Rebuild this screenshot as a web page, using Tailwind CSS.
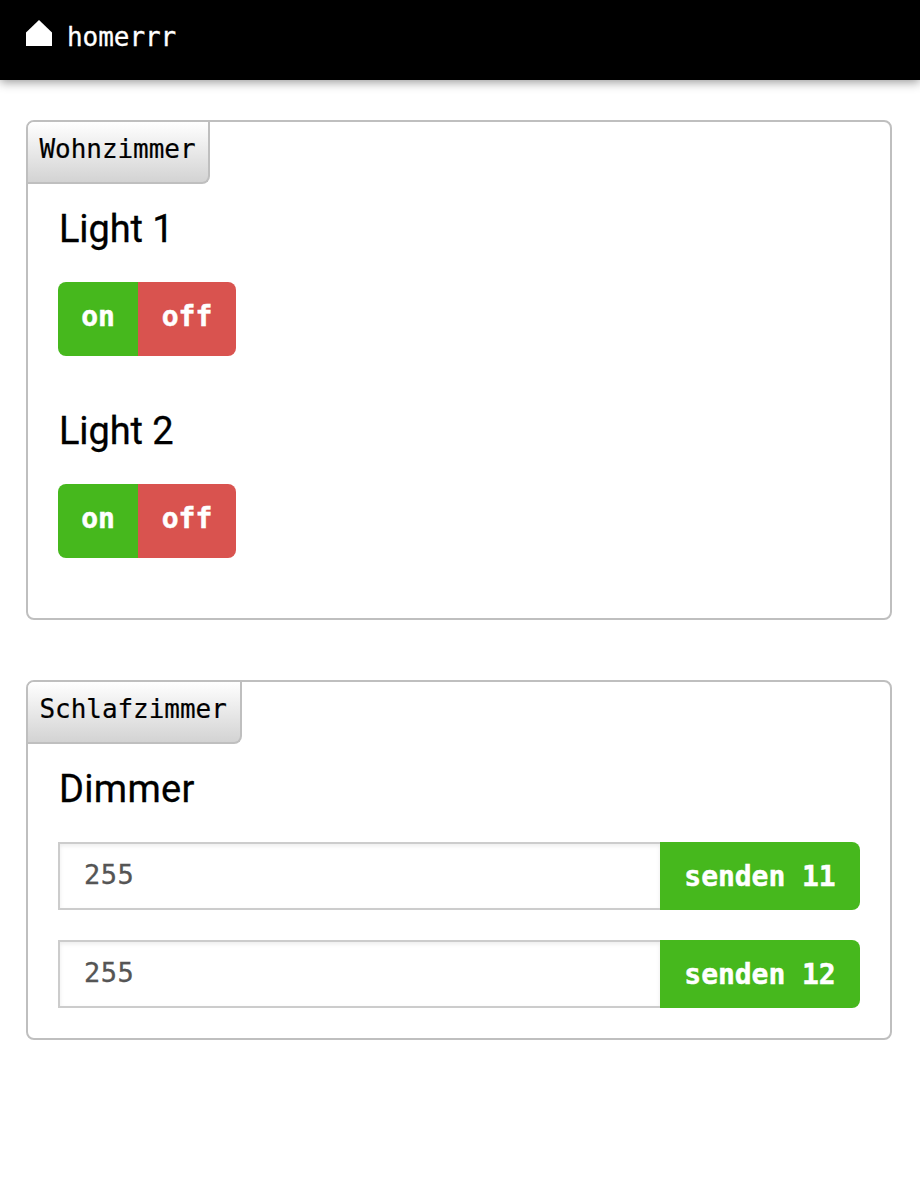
<!DOCTYPE html>
<html lang="de">
<head>
<meta charset="utf-8">
<title>homerrr</title>
<script src="https://cdn.jsdelivr.net/npm/@tailwindcss/browser@4"></script>
</head>
<body class="min-h-screen bg-white text-black font-['DejaVu_Sans_Mono',monospace]">
<header class="flex h-20 bg-black pl-[26px] text-white shadow-[0_2px_10px_rgba(0,0,0,0.42)]">
  <svg class="mt-5 h-[26px] w-[26px]" viewBox="0 0 26 26" fill="currentColor"><path d="M13 0L26 12.5V26H0V12.5Z"/></svg>
  <span class="ml-[15px] text-[26px] leading-[75px] tracking-[-0.05px] [-webkit-text-stroke:0.3px_currentColor]">homerrr</span>
</header>
<main class="flex flex-col gap-[60px] pt-10 pr-7 pl-[26px]">
  <section class="h-[500px] rounded-lg border-2 border-[#bfbfbf]">
    <div class="h-[62px] w-[182px] rounded-tl-md rounded-br-lg border-r-2 border-b-2 border-[#bfbfbf] bg-linear-to-b from-white to-[#d3d3d3] pl-[11.5px] text-[26px] leading-[55px] tracking-[-0.05px] [-webkit-text-stroke:0.2px_currentColor]">Wohnzimmer</div>
    <div class="px-[30px] pt-[13px]">
      <h2 class="h-[60px] pl-px font-['Roboto',sans-serif] text-[38px] leading-[65px] tracking-[-0.1px] [-webkit-text-stroke:0.3px_currentColor]">Light 1</h2>
      <div class="mt-[25px] flex h-[74px] w-[178px] overflow-hidden rounded-lg text-[28px] tracking-[-0.05px] font-bold text-white [-webkit-text-stroke:0.5px_currentColor]">
        <button class="w-20 bg-[#46b81d] pb-[5px]">on</button><button class="w-[98px] bg-[#d9534f] pb-[5px]">off</button>
      </div>
      <h2 class="mt-[43px] h-[60px] pl-px font-['Roboto',sans-serif] text-[38px] leading-[65px] tracking-[-0.1px] [-webkit-text-stroke:0.3px_currentColor]">Light 2</h2>
      <div class="mt-[25px] flex h-[74px] w-[178px] overflow-hidden rounded-lg text-[28px] tracking-[-0.05px] font-bold text-white [-webkit-text-stroke:0.5px_currentColor]">
        <button class="w-20 bg-[#46b81d] pb-[5px]">on</button><button class="w-[98px] bg-[#d9534f] pb-[5px]">off</button>
      </div>
    </div>
  </section>
  <section class="h-[360px] rounded-lg border-2 border-[#bfbfbf]">
    <div class="h-[62px] w-[214px] rounded-tl-md rounded-br-lg border-r-2 border-b-2 border-[#bfbfbf] bg-linear-to-b from-white to-[#d3d3d3] pl-[11.5px] text-[26px] leading-[55px] tracking-[-0.05px] [-webkit-text-stroke:0.2px_currentColor]">Schlafzimmer</div>
    <div class="px-[30px] pt-[13px]">
      <h2 class="h-[60px] pl-px font-['Roboto',sans-serif] text-[38px] leading-[65px] tracking-[0.3px] [-webkit-text-stroke:0.3px_currentColor]">Dimmer</h2>
      <div class="mt-[25px] flex h-[68px] text-[28px] tracking-[-0.05px]">
        <div class="flex-1 border-2 border-r-0 border-[#ccc] pl-6 text-[27px] leading-[61px] tracking-[0.55px] text-[#555] shadow-[inset_0_2px_4px_rgba(0,0,0,0.08)] [-webkit-text-stroke:0.3px_currentColor]">255</div>
        <button class="w-[200px] rounded-r-lg bg-[#46b81d] pt-[2px] font-bold text-white [-webkit-text-stroke:0.5px_currentColor]">senden 11</button>
      </div>
      <div class="mt-[30px] flex h-[68px] text-[28px] tracking-[-0.05px]">
        <div class="flex-1 border-2 border-r-0 border-[#ccc] pl-6 text-[27px] leading-[61px] tracking-[0.55px] text-[#555] shadow-[inset_0_2px_4px_rgba(0,0,0,0.08)] [-webkit-text-stroke:0.3px_currentColor]">255</div>
        <button class="w-[200px] rounded-r-lg bg-[#46b81d] pt-[2px] font-bold text-white [-webkit-text-stroke:0.5px_currentColor]">senden 12</button>
      </div>
    </div>
  </section>
</main>
</body>
</html>
